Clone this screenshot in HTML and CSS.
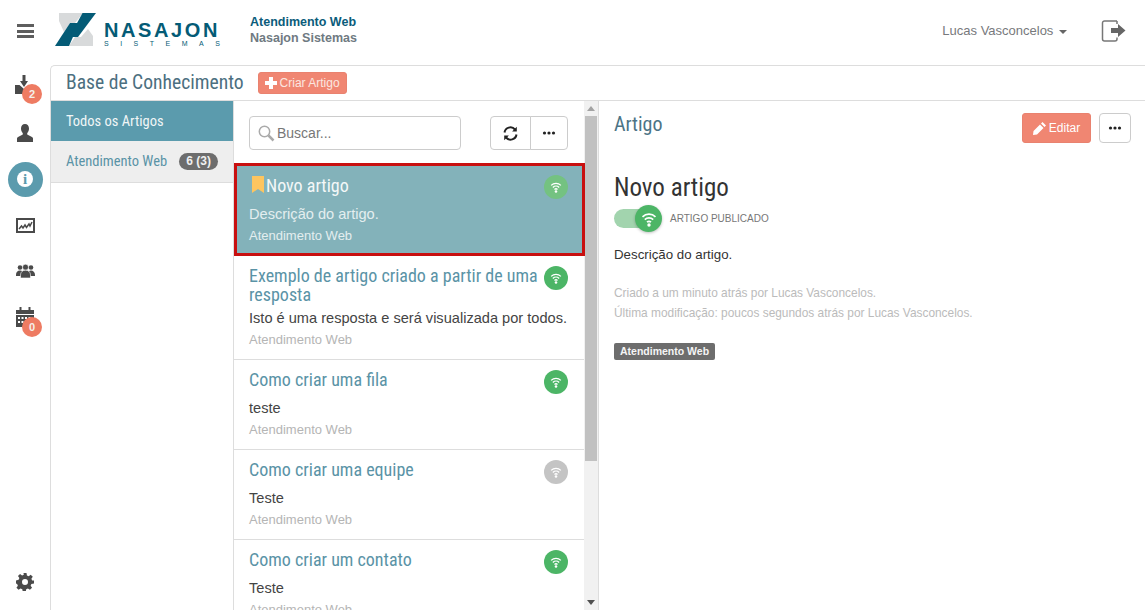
FILE: index.html
```html
<!DOCTYPE html>
<html lang="pt-BR">
<head>
  <meta charset="UTF-8">
  <title>Base de Conhecimento</title>
  <link rel="stylesheet" href="styles.css">
</head>
<body>
  <svg class="sprites" width="0" height="0">
    <symbol id="wifi" viewBox="0 0 16 16">
      <path d="M1.500 5.800a9.400 9.400 0 0 1 13 0M3.800 8.600a6 6 0 0 1 8.400 0M6 11.200a3 3 0 0 1 4 0" fill="none" stroke="currentColor" stroke-width="1.700"/>
      <circle cx="8" cy="14" r="1.700" fill="currentColor"/>
    </symbol>
    <symbol id="dots" viewBox="0 0 14 4">
      <circle cx="2.500" cy="2" r="1.600"/><circle cx="7" cy="2" r="1.600"/><circle cx="11.500" cy="2" r="1.600"/>
    </symbol>
  </svg>

  <header class="topbar">
    <button class="burger" aria-label="Menu"><span></span><span></span><span></span></button>
    <div class="logo">
      <svg class="logo-mark" width="42" height="35" viewBox="0 0 42 35">
        <path d="M4 1H28L20 11H15L9 20L4 9zM14 34H38V24L33 17L26 25H20z" fill="#d8dadb"/>
        <path d="M0 34H14L24 11H15z" fill="#045b76"/>
        <path d="M27.500 1H41L23 25H14.500z" fill="#045b76"/>
      </svg>
      <div class="logo-text">
        <div class="logo-name">NASAJON</div>
        <div class="logo-sub">SISTEMAS</div>
      </div>
    </div>
    <div class="app-name">
      <div class="app-title">Atendimento Web</div>
      <div class="app-company">Nasajon Sistemas</div>
    </div>
    <div class="user">Lucas Vasconcelos <span class="caret"></span></div>
    <svg class="logout" width="26" height="22" viewBox="0 0 26 22">
      <path d="M16 1H3.500A2 2 0 0 0 1.500 3v16a2 2 0 0 0 2 2H14a2 2 0 0 0 2-2v-1.500M16 1v3" fill="none" stroke="#777" stroke-width="1.500"/>
      <path d="M10 8h7V4l7.500 6.500L17 17v-4h-7z" fill="#666"/>
    </svg>
  </header>

  <div class="app">
    <nav class="sidenav">
      <a class="nav-item">
        <svg class="icon-import" width="20" height="19" viewBox="0 0 20 19" fill="#4a4a4a"><path d="M7.500 0h3v6H13l-4 6-4-6h2.500z"/><path d="M0 10h4.500L9 14l5-3v8H0z"/></svg>
        <span class="badge">2</span>
      </a>
      <a class="nav-item">
        <svg width="16" height="18" viewBox="0 0 16 18" fill="#4a4a4a"><path d="M8 0c2.500 0 4 1.900 4 4.600 0 1.900-.9 3.600-1.800 4.600v1.300l4.300 2.200c1 .5 1.500 1 1.500 2V18H0v-3.300c0-1 .5-1.500 1.500-2l4.300-2.200V9.200C4.900 8.200 4 6.500 4 4.600 4 1.900 5.500 0 8 0z"/></svg>
      </a>
      <a class="nav-item">
        <span class="info-circle"><span class="info-i">i</span></span>
      </a>
      <a class="nav-item">
        <svg width="19" height="15" viewBox="0 0 19 15"><rect x="1" y="1" width="17" height="13" fill="#fff" stroke="#4a4a4a" stroke-width="2"/><path d="M3 11l2.500-3 1.500 2 2-3 1.500 2.500L13 6l1 2 2-4" fill="none" stroke="#4a4a4a" stroke-width="1.500"/></svg>
      </a>
      <a class="nav-item">
        <svg width="19" height="14" viewBox="0 0 19 14" fill="#4a4a4a"><circle cx="4" cy="3.500" r="2.300"/><circle cx="15" cy="3.500" r="2.300"/><path d="M0 11c0-3 1.500-4.500 4-4.500S7 8 7 11v1H0zM12 11c0-3 1-4.500 3-4.500s4 1.500 4 4.500v1h-7z"/><circle cx="9.500" cy="3.200" r="3" stroke="#fff" stroke-width=".6"/><path d="M4.500 14v-3c0-3 2-4.800 5-4.800s5 1.800 5 4.800v3z" stroke="#fff" stroke-width=".6"/></svg>
      </a>
      <a class="nav-item">
        <svg width="18" height="20" viewBox="0 0 18 20" fill="#4a4a4a"><path d="M0 3h3.500V0h2v3h7V0h2v3H18v4H0z"/><path d="M0 8h18v12H0zM2 10v2h2v-2zm3.500 0v2h2v-2zm3.500 0v2h2v-2zm3.500 0v2h2v-2zM2 14v2h2v-2zm3.500 0v2h2v-2zm3.500 0v2h2v-2zm3.500 0v2h2v-2z" fill-rule="evenodd"/></svg>
        <span class="badge badge-low">0</span>
      </a>
      <a class="nav-item nav-bottom">
        <svg width="18" height="18" viewBox="0 0 24 24" fill="#4a4a4a"><path fill-rule="evenodd" d="M10 0h4l.6 3.200 2.300 1 2.700-1.900 2.800 2.800-1.900 2.700 1 2.300L24 10v4l-3.500.6-1 2.300 1.900 2.700-2.800 2.800-2.700-1.900-2.300 1-.6 3.500h-4l-.6-3.500-2.300-1-2.700 1.900-2.800-2.800 1.900-2.700-1-2.300L0 14v-4l3.500-.9 1-2.300-1.900-2.700 2.800-2.800 2.700 1.900 2.300-1zM12 8a4 4 0 1 0 0 8 4 4 0 0 0 0-8z"/></svg>
      </a>
    </nav>

    <main class="panel">
      <div class="panel-head">
        <h1 class="cond page-title">Base de Conhecimento</h1>
        <button class="btn-salmon btn-create"><span class="plus"></span>Criar Artigo</button>
      </div>
      <div class="columns">
        <aside class="categories">
          <div class="cat cat-active"><span class="cond">Todos os Artigos</span></div>
          <div class="cat"><span class="cond">Atendimento Web</span><span class="count">6 (3)</span></div>
        </aside>

        <section class="list-col">
          <div class="list-scroll">
            <div class="toolbar">
              <div class="search">
                <svg width="17" height="17" viewBox="0 0 17 17" fill="none"><circle cx="6.500" cy="6.500" r="5.200" stroke="#aaa" stroke-width="1.500"/><path d="M10.500 10.500l5 5" stroke="#aaa" stroke-width="2.500"/></svg>
                <span>Buscar...</span>
              </div>
              <div class="btn-group">
                <button class="tool-btn">
                  <svg width="15" height="15" viewBox="0 0 15 15" fill="none" stroke="#222" stroke-width="2"><path d="M1.500 6.500A6 6 0 0 1 12 3.500M13.500 8.500A6 6 0 0 1 3 11.500"/><path d="M13.800 .8v4.700H9.100zM1.200 14.200V9.500h4.700z" fill="#222" stroke="none"/></svg>
                </button>
                <button class="tool-btn"><svg class="dots" width="14" height="4"><use href="#dots"/></svg></button>
              </div>
            </div>

            <article class="item item-selected">
              <div class="item-title cond">
                <svg class="bookmark" width="12" height="17" viewBox="0 0 12 17"><path d="M0 0h12v17l-6-4-6 4z" fill="#fdc55f"/></svg>Novo artigo
              </div>
              <p class="item-desc">Descrição do artigo.</p>
              <p class="item-group">Atendimento Web</p>
              <span class="pub pub-soft"><svg width="12" height="12"><use href="#wifi"/></svg></span>
            </article>
            <article class="item">
              <div class="item-title cond">Exemplo de artigo criado a partir de uma resposta</div>
              <p class="item-desc">Isto é uma resposta e será visualizada por todos.</p>
              <p class="item-group">Atendimento Web</p>
              <span class="pub"><svg width="12" height="12"><use href="#wifi"/></svg></span>
            </article>
            <article class="item">
              <div class="item-title cond">Como criar uma fila</div>
              <p class="item-desc">teste</p>
              <p class="item-group">Atendimento Web</p>
              <span class="pub"><svg width="12" height="12"><use href="#wifi"/></svg></span>
            </article>
            <article class="item">
              <div class="item-title cond">Como criar uma equipe</div>
              <p class="item-desc">Teste</p>
              <p class="item-group">Atendimento Web</p>
              <span class="pub pub-off"><svg width="12" height="12"><use href="#wifi"/></svg></span>
            </article>
            <article class="item">
              <div class="item-title cond">Como criar um contato</div>
              <p class="item-desc">Teste</p>
              <p class="item-group">Atendimento Web</p>
              <span class="pub"><svg width="12" height="12"><use href="#wifi"/></svg></span>
            </article>
          </div>
          <div class="scrollbar">
            <span class="arrow-up"></span>
            <div class="scroll-track"><div class="scroll-thumb"></div></div>
            <span class="arrow-down"></span>
          </div>
        </section>

        <section class="detail">
          <div class="detail-head">
            <h2 class="cond detail-label">Artigo</h2>
            <div class="detail-actions">
              <button class="btn-salmon btn-edit">
                <svg width="13" height="13" viewBox="0 0 13 13" fill="#fff"><path d="M9.500 0L13 3.500l-1.500 1.500L8 1.500zM7 2.500L10.500 6l-6.500 6.500L0 13l.5-4z"/></svg>
                Editar
              </button>
              <button class="tool-btn btn-more"><svg class="dots" width="14" height="4"><use href="#dots"/></svg></button>
            </div>
          </div>
          <h3 class="cond detail-title">Novo artigo</h3>
          <div class="status">
            <div class="toggle"><span class="knob"><svg width="16" height="16"><use href="#wifi"/></svg></span></div>
            <span class="status-label">ARTIGO PUBLICADO</span>
          </div>
          <p class="detail-desc">Descrição do artigo.</p>
          <p class="meta">Criado a um minuto atrás por Lucas Vasconcelos.</p>
          <p class="meta">Última modificação: poucos segundos atrás por Lucas Vasconcelos.</p>
          <span class="tag">Atendimento Web</span>
        </section>
      </div>
    </main>
  </div>
</body>
</html>
```

FILE: styles.css
```css
* {
  box-sizing: border-box;
}

html, body {
  height: 100%;
}

body {
  margin: 0;
  font-family: "Liberation Sans", Arial, sans-serif;
  font-size: 13px;
  color: #333;
  background: #fff;
  overflow: hidden;
}

p, h1, h2, h3 {
  margin: 0;
  font-weight: normal;
}

button {
  font-family: inherit;
  cursor: pointer;
}

.sprites {
  position: absolute;
}

.cond {
  font-family: "Roboto Condensed", Roboto, sans-serif;
  font-stretch: 75%;
}

/* top bar */
.topbar {
  height: 65px;
  display: flex;
  align-items: center;
}

.burger {
  width: 50px;
  height: 40px;
  border: 0;
  background: none;
  display: flex;
  flex-direction: column;
  align-items: center;
  justify-content: center;
  gap: 2.500px;
  padding: 0 0 0 1px;
  margin-top: -3px;
}

.burger span {
  width: 17px;
  height: 3px;
  background: #5e5e5e;
}

.logo {
  display: flex;
  align-items: flex-start;
  margin-left: 5px;
  height: 36px;
  margin-top: -5px;
}

.logo-text {
  width: 117px;
  margin-left: 7px;
  padding-top: 9px;
}

.logo-name {
  font-size: 20px;
  line-height: 19px;
  font-weight: bold;
  color: #045b76;
  letter-spacing: 2.600px;
  white-space: nowrap;
}

.logo-sub {
  font-size: 7px;
  line-height: 7px;
  color: #045b76;
  letter-spacing: 11.500px;
  white-space: nowrap;
}

.app-name {
  margin-left: 29px;
  font-size: 12.500px;
  font-weight: bold;
  line-height: 16px;
  margin-top: -5px;
}

.app-title {
  color: #0b5c7b;
}

.app-company {
  color: #6f7a82;
}

.user {
  margin-left: auto;
  color: #77797c;
  font-size: 13px;
  margin-top: -4px;
}

.caret {
  display: inline-block;
  margin-left: 2px;
  border: 4px solid transparent;
  border-top-color: #666;
  border-bottom: 0;
  vertical-align: middle;
}

.logout {
  margin: -4px 18px 0 34px;
}

/* layout */
.app {
  display: flex;
  height: 545px;
}

.sidenav {
  width: 50px;
  flex: none;
  display: flex;
  flex-direction: column;
  align-items: center;
  margin-top: -1px;
  padding-bottom: 5px;
}

.nav-item {
  position: relative;
  height: 46px;
  width: 50px;
  display: flex;
  align-items: center;
  justify-content: center;
}

.nav-bottom {
  margin-top: auto;
}

.icon-import {
  margin-top: -6px;
}

.badge {
  position: absolute;
  left: 22px;
  top: 20px;
  width: 20px;
  height: 20px;
  border-radius: 50%;
  background: #ee7b62;
  color: #f4f0ea;
  font-size: 11px;
  font-weight: bold;
  line-height: 20px;
  text-align: center;
}

.badge-low {
  top: 23px;
}

.info-circle {
  width: 35px;
  height: 35px;
  border-radius: 50%;
  background: #5b9bad;
  display: flex;
  align-items: center;
  justify-content: center;
}

.info-i {
  width: 16px;
  height: 16px;
  border-radius: 50%;
  background: #fff;
  color: #5b9bad;
  font-family: "Liberation Serif", serif;
  font-weight: bold;
  font-size: 15px;
  line-height: 16px;
  text-align: center;
}

.panel {
  flex: 1;
  min-width: 0;
  display: flex;
  flex-direction: column;
  border-left: 1px solid #ddd;
  border-top: 1px solid #ddd;
  border-top-left-radius: 5px;
}

.panel-head {
  height: 35px;
  flex: none;
  display: flex;
  align-items: center;
  padding-left: 15px;
  padding-bottom: 1px;
  border-bottom: 1px solid #ddd;
}

.page-title {
  font-size: 19.600px;
  color: #4c6f80;
}

.btn-salmon {
  border: 1px solid #e9826f;
  background: #f08672;
  color: #fff;
  border-radius: 3px;
}

.btn-create {
  height: 22px;
  margin-left: 14px;
  padding: 0 6px;
  font-size: 12px;
  color: #fbe6e0;
  display: flex;
  align-items: center;
}

.plus {
  width: 12px;
  height: 12px;
  margin-right: 3px;
  background:
    linear-gradient(#fff, #fff) center / 12px 4px no-repeat,
    linear-gradient(#fff, #fff) center / 4px 12px no-repeat;
}

.columns {
  flex: 1;
  display: flex;
  min-height: 0;
}

/* categories */
.categories {
  width: 183px;
  flex: none;
  border-right: 1px solid #ddd;
}

.cat {
  height: 42px;
  display: flex;
  align-items: center;
  justify-content: space-between;
  padding: 0 15px;
  background: #eee;
  border-bottom: 1px solid #ddd;
  color: #5a93a6;
  font-size: 14.500px;
}

.cat-active {
  height: 40px;
  background: #5b9bad;
  border-bottom: 0;
  color: #f1f6f7;
}

.count {
  background: #6d6d6d;
  color: #f0f0f0;
  font-size: 12px;
  font-weight: bold;
  line-height: 17px;
  border-radius: 9px;
  padding: 0 7px;
}

/* article list */
.list-col {
  width: 365px;
  flex: none;
  display: flex;
  border-right: 1px solid #ddd;
  min-height: 0;
  overflow: hidden;
}

.list-scroll {
  width: 350px;
  flex: none;
}

.toolbar {
  height: 62px;
  display: flex;
  justify-content: space-between;
  padding: 15px 16px 0 15px;
}

.search {
  width: 212px;
  height: 34px;
  border: 1px solid #ccc;
  border-radius: 4px;
  display: flex;
  align-items: center;
  gap: 2px;
  padding-left: 8px;
  color: #777;
  font-size: 14px;
}

.btn-group {
  display: flex;
  height: 34px;
}

.tool-btn {
  background: #fff;
  border: 1px solid #ccc;
  border-radius: 4px;
  padding: 0;
  display: flex;
  align-items: center;
  justify-content: center;
}

.btn-group .tool-btn {
  width: 41px;
}

.btn-group .tool-btn:first-child {
  border-radius: 4px 0 0 4px;
}

.btn-group .tool-btn:last-child {
  width: 38px;
  margin-left: -1px;
  border-radius: 0 4px 4px 0;
}

.dots {
  fill: #222;
}

.item {
  position: relative;
  padding: 10px 15px 0;
  height: 90px;
  border-bottom: 1px solid #ddd;
}

.item:nth-of-type(2) {
  height: 104px;
}

.item-selected {
  height: 93px;
  margin-right: -1px;
  padding: 10px 12px 0;
  background: #83b2ba;
  border: 3px solid #c80f0f;
}

.item-title {
  font-size: 18px;
  line-height: 19px;
  min-height: 24px;
  color: #5a93a6;
  padding-right: 30px;
}

.item-selected .item-title {
  color: #f4f8f8;
  display: flex;
  align-items: flex-start;
}

.bookmark {
  margin: 0 2px 0 3px;
}

.item-desc {
  margin-top: 4px;
  font-size: 14.600px;
  line-height: 20px;
  white-space: nowrap;
  color: #444;
}

.item-group {
  margin-top: 2px;
  font-size: 13px;
  line-height: 20px;
  color: #b5b5b5;
}

.item-selected .item-desc,
.item-selected .item-group {
  color: #e3eeef;
}

.pub {
  position: absolute;
  right: 16px;
  top: 10px;
  width: 24px;
  height: 24px;
  border-radius: 50%;
  background: #4cb566;
  color: #fff;
  display: flex;
  align-items: center;
  justify-content: center;
}

.item-selected .pub {
  right: 14px;
  top: 9px;
}

.pub-soft {
  background: #74c281;
}

.pub-off {
  background: #c4c4c4;
}

/* scrollbar */
.scrollbar {
  flex: 1;
  background: #f1f1f1;
  display: flex;
  flex-direction: column;
  align-items: center;
}

.scroll-track {
  flex: 1;
  width: 12px;
}

.scroll-thumb {
  height: 345px;
  background: #c1c1c1;
}

.arrow-up,
.arrow-down {
  flex: none;
  width: 0;
  height: 5px;
  border-left: 4px solid transparent;
  border-right: 4px solid transparent;
}

.arrow-up {
  border-bottom: 5px solid #a3a3a3;
  margin: 5px 0;
}

.arrow-down {
  border-top: 5px solid #505050;
  margin: 5px 0;
}

/* detail */
.detail {
  flex: 1;
  padding: 11px 14px 0 15px;
  min-width: 0;
}

.detail-head {
  display: flex;
  justify-content: space-between;
  height: 61px;
}

.detail-label {
  font-size: 20px;
  line-height: 24px;
  color: #4c7486;
}

.detail-actions {
  display: flex;
  gap: 8px;
  margin-top: 1px;
}

.btn-edit {
  width: 69px;
  height: 30px;
  font-size: 12px;
  display: flex;
  align-items: center;
  justify-content: center;
  gap: 3px;
}

.btn-more {
  width: 32px;
  height: 30px;
}

.detail-title {
  font-size: 25px;
  line-height: 30px;
  color: #333;
}

.status {
  display: flex;
  align-items: center;
  margin-top: 6px;
}

.toggle {
  position: relative;
  width: 36px;
  height: 19px;
  border-radius: 10px;
  background: #a2d4ae;
}

.knob {
  position: absolute;
  right: -12px;
  top: -4px;
  width: 27px;
  height: 27px;
  border-radius: 50%;
  background: #4cb566;
  color: #fff;
  box-shadow: 0 1px 3px rgba(0,0,0,.25);
  display: flex;
  align-items: center;
  justify-content: center;
}

.status-label {
  margin-left: 20px;
  font-size: 10px;
  color: #777;
}

.detail-desc {
  margin-top: 18px;
  font-size: 13.300px;
  line-height: 18px;
  color: #333;
}

.detail-desc + .meta {
  margin-top: 19px;
}

.meta {
  font-size: 11.900px;
  line-height: 20px;
  color: #bbb;
}

.tag {
  display: inline-block;
  margin-top: 20px;
  padding: 0 6px;
  height: 17px;
  line-height: 17px;
  border-radius: 2px;
  background: #6d6d6d;
  color: #f5f5f5;
  font-size: 10.500px;
  font-weight: bold;
}
```
